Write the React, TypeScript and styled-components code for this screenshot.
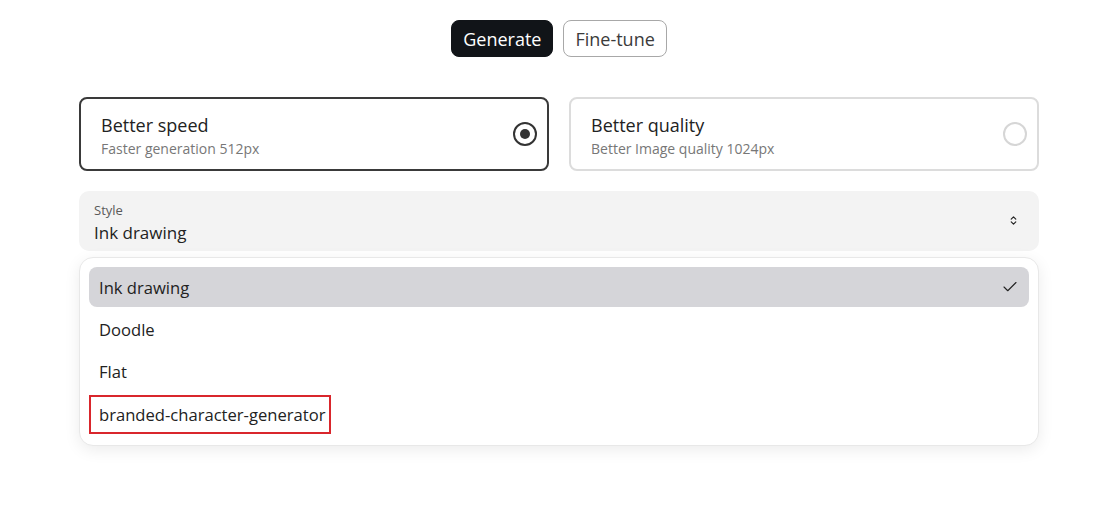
import React from 'react';
import styled, { createGlobalStyle } from 'styled-components';
import { Check, ChevronsUpDown } from 'lucide-react';

const GlobalStyle = createGlobalStyle`
  body {
    margin: 0;
    background: #ffffff;
    font-family: 'Open Sans', 'Noto Sans', sans-serif;
    color: #1f1f1f;
  }
`;

const options = [
  { title: 'Better speed', sub: 'Faster generation 512px', selected: true },
  { title: 'Better quality', sub: 'Better Image quality 1024px', selected: false },
];

const styles = ['Ink drawing', 'Doodle', 'Flat', 'branded-character-generator'];

export default function App() {
  return (
    <>
      <GlobalStyle />
      <Page>
        <Tabs>
          <Tab active>Generate</Tab>
          <Tab>Fine-tune</Tab>
        </Tabs>
        <Main>
          <CardRow>
            {options.map((o) => (
              <Card key={o.title} selected={o.selected}>
                <CardText>
                  <CardTitle>{o.title}</CardTitle>
                  <CardSub>{o.sub}</CardSub>
                </CardText>
                <Radio selected={o.selected} />
              </Card>
            ))}
          </CardRow>
          <SelectWrap>
            <SelectTrigger>
              <div>
                <SelectLabel>Style</SelectLabel>
                <SelectValue>Ink drawing</SelectValue>
              </div>
              <ChevronsUpDown size={11} strokeWidth={2.6} color="#222" />
            </SelectTrigger>
            <Menu>
              {styles.map((s, i) => (
                <MenuItem key={s} active={i === 0}>
                  {i === 3 ? <Marked>{s}</Marked> : s}
                  {i === 0 && <Check size={18} strokeWidth={1.5} color="#222" />}
                </MenuItem>
              ))}
            </Menu>
          </SelectWrap>
        </Main>
      </Page>
    </>
  );
}

const Page = styled.div`
  width: 1120px;
  height: 515px;
  padding-top: 20px;
  box-sizing: border-box;
`;

const Tabs = styled.div`
  display: flex;
  justify-content: center;
  gap: 10px;
  padding-right: 2px;
`;

const Tab = styled.button<{ active?: boolean }>`
  height: 37px;
  padding: 0 11px;
  border-radius: 8px;
  font-family: inherit;
  font-size: 18px;
  line-height: 1;
  cursor: pointer;
  background: ${(p) => (p.active ? '#111418' : '#ffffff')};
  color: ${(p) => (p.active ? '#ffffff' : '#3b3b3b')};
  border: 1px solid ${(p) => (p.active ? '#111418' : '#a8a8a8')};
`;

const Main = styled.div`
  width: 960px;
  margin: 40px 0 0 79px;
`;

const CardRow = styled.div`
  display: grid;
  grid-template-columns: 1fr 1fr;
  gap: 20px;
`;

const Card = styled.div<{ selected?: boolean }>`
  height: 74px;
  box-sizing: border-box;
  border: 2px solid ${(p) => (p.selected ? '#3a3a3a' : '#dcdcdc')};
  border-radius: 8px;
  padding: 0 10px 0 20px;
  display: flex;
  align-items: center;
  justify-content: space-between;
`;

const CardText = styled.div`
  display: flex;
  flex-direction: column;
  gap: 2px;
  padding-top: 2px;
`;

const CardTitle = styled.div`
  font-size: 18px;
  color: #222;
`;

const CardSub = styled.div`
  font-size: 14px;
  color: #777;
`;

const Radio = styled.span<{ selected?: boolean }>`
  width: 24px;
  height: 24px;
  box-sizing: border-box;
  border-radius: 50%;
  border: 2px solid ${(p) => (p.selected ? '#333' : '#d6d6d6')};
  display: flex;
  align-items: center;
  justify-content: center;
  &::after {
    content: '';
    width: 10px;
    height: 10px;
    border-radius: 50%;
    background: #333;
    display: ${(p) => (p.selected ? 'block' : 'none')};
  }
`;

const SelectWrap = styled.div`
  position: relative;
  margin-top: 20px;
`;

const SelectTrigger = styled.div`
  height: 60px;
  box-sizing: border-box;
  background: #f3f3f3;
  border-radius: 10px;
  padding: 10px 20px 0 15px;
  display: flex;
  justify-content: space-between;
  align-items: flex-start;
  & > svg {
    margin-top: 14px;
  }
`;

const SelectLabel = styled.div`
  font-size: 13px;
  color: #5a5a5a;
  line-height: 18px;
`;

const SelectValue = styled.div`
  font-size: 17px;
  color: #222;
  line-height: 23px;
  margin-top: 2px;
`;

const Menu = styled.div`
  position: absolute;
  top: 66px;
  left: 0;
  right: 0;
  background: #fff;
  border: 1px solid #e8e8e8;
  border-radius: 14px;
  box-shadow: 0 4px 16px rgba(0, 0, 0, 0.08);
  padding: 9px 9px 12px;
  display: flex;
  flex-direction: column;
  gap: 2px;
`;

const MenuItem = styled.div<{ active?: boolean }>`
  height: 40px;
  display: flex;
  align-items: center;
  justify-content: space-between;
  padding: 0 10px;
  border-radius: 8px;
  font-size: 16.6px;
  color: #222;
  background: ${(p) => (p.active ? '#d5d5d9' : 'transparent')};
`;

const Marked = styled.span`
  outline: 2px solid #d9262c;
  padding: 6px 4px 6px 8px;
  margin-left: -8px;
  position: relative;
  top: 1px;
`;
